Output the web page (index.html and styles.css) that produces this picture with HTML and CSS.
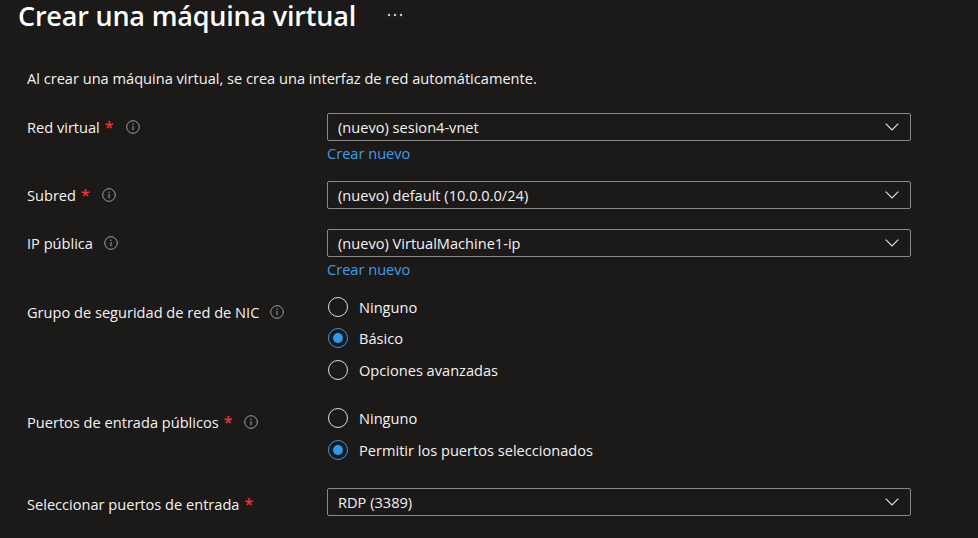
FILE: index.html
```html
<!DOCTYPE html>
<html lang="es">
<head>
<meta charset="utf-8">
<title>Crear una máquina virtual</title>
<link rel="stylesheet" href="styles.css">
</head>
<body>
<div class="page">
  <header class="header">
    <h1 class="title">Crear una máquina virtual</h1>
    <span class="more" aria-label="Más">
      <svg width="16" height="4" viewBox="0 0 16 4"><circle cx="2" cy="2" r="1.2" fill="#d2d0ce"/><circle cx="8" cy="2" r="1.2" fill="#d2d0ce"/><circle cx="14" cy="2" r="1.2" fill="#d2d0ce"/></svg>
    </span>
  </header>

  <p class="intro">Al crear una máquina virtual, se crea una interfaz de red automáticamente.</p>

  <div class="form">
    <div class="row r1">
      <div class="label"><span>Red virtual</span><span class="req">*</span><span class="info"><svg width="14" height="14" viewBox="0 0 14 14"><circle cx="7" cy="7" r="6.3" fill="none" stroke="#a19f9d" stroke-width="1"/><rect x="6.5" y="6" width="1" height="4.2" fill="#a19f9d"/><circle cx="7" cy="4.2" r="0.7" fill="#a19f9d"/></svg></span></div>
      <div class="control">
        <div class="select"><span>(nuevo) sesion4-vnet</span><svg class="chev" width="14" height="8" viewBox="0 0 14 8"><path d="M0.7 0.7 L7 7 L13.3 0.7" fill="none" stroke="#e1dfdd" stroke-width="1.2"/></svg></div>
        <a class="link">Crear nuevo</a>
      </div>
    </div>

    <div class="row r2">
      <div class="label"><span>Subred</span><span class="req">*</span><span class="info"><svg width="14" height="14" viewBox="0 0 14 14"><circle cx="7" cy="7" r="6.3" fill="none" stroke="#a19f9d" stroke-width="1"/><rect x="6.5" y="6" width="1" height="4.2" fill="#a19f9d"/><circle cx="7" cy="4.2" r="0.7" fill="#a19f9d"/></svg></span></div>
      <div class="control">
        <div class="select"><span>(nuevo) default (10.0.0.0/24)</span><svg class="chev" width="14" height="8" viewBox="0 0 14 8"><path d="M0.7 0.7 L7 7 L13.3 0.7" fill="none" stroke="#e1dfdd" stroke-width="1.2"/></svg></div>
      </div>
    </div>

    <div class="row r3">
      <div class="label"><span>IP pública</span><span class="info nreq"><svg width="14" height="14" viewBox="0 0 14 14"><circle cx="7" cy="7" r="6.3" fill="none" stroke="#a19f9d" stroke-width="1"/><rect x="6.5" y="6" width="1" height="4.2" fill="#a19f9d"/><circle cx="7" cy="4.2" r="0.7" fill="#a19f9d"/></svg></span></div>
      <div class="control">
        <div class="select"><span>(nuevo) VirtualMachine1-ip</span><svg class="chev" width="14" height="8" viewBox="0 0 14 8"><path d="M0.7 0.7 L7 7 L13.3 0.7" fill="none" stroke="#e1dfdd" stroke-width="1.2"/></svg></div>
        <a class="link">Crear nuevo</a>
      </div>
    </div>

    <div class="row r4">
      <div class="label lab-radio"><span>Grupo de seguridad de red de NIC</span><span class="info nreq"><svg width="14" height="14" viewBox="0 0 14 14"><circle cx="7" cy="7" r="6.3" fill="none" stroke="#a19f9d" stroke-width="1"/><rect x="6.5" y="6" width="1" height="4.2" fill="#a19f9d"/><circle cx="7" cy="4.2" r="0.7" fill="#a19f9d"/></svg></span></div>
      <div class="control radios">
        <div class="radio"><span class="dot"></span><span>Ninguno</span></div>
        <div class="radio on"><span class="dot"></span><span>Básico</span></div>
        <div class="radio"><span class="dot"></span><span>Opciones avanzadas</span></div>
      </div>
    </div>

    <div class="row r5">
      <div class="label lab-radio2"><span>Puertos de entrada públicos</span><span class="req">*</span><span class="info"><svg width="14" height="14" viewBox="0 0 14 14"><circle cx="7" cy="7" r="6.3" fill="none" stroke="#a19f9d" stroke-width="1"/><rect x="6.5" y="6" width="1" height="4.2" fill="#a19f9d"/><circle cx="7" cy="4.2" r="0.7" fill="#a19f9d"/></svg></span></div>
      <div class="control radios">
        <div class="radio"><span class="dot"></span><span>Ninguno</span></div>
        <div class="radio on"><span class="dot"></span><span>Permitir los puertos seleccionados</span></div>
      </div>
    </div>

    <div class="row r6">
      <div class="label"><span>Seleccionar puertos de entrada</span><span class="req">*</span></div>
      <div class="control">
        <div class="select"><span>RDP (3389)</span><svg class="chev" width="14" height="8" viewBox="0 0 14 8"><path d="M0.7 0.7 L7 7 L13.3 0.7" fill="none" stroke="#e1dfdd" stroke-width="1.2"/></svg></div>
      </div>
    </div>
  </div>
</div>
</body>
</html>
```

FILE: styles.css
```css
html, body {
  margin: 0;
  padding: 0;
  background: #1b1a19;
  height: 100%;
  overflow: hidden;
}
body {
  font-family: "Open Sans", "Noto Sans", sans-serif;
  font-size: 14.6px;
  color: #f3f2f1;
}
.page {
  padding-left: 27px;
}
.header {
  display: flex;
  align-items: center;
  margin-left: -9px;
  height: 32px;
}
.title {
  margin: 0;
  font-size: 27px;
  font-weight: 600;
  line-height: 32px;
  color: #ffffff;
  letter-spacing: -0.2px;
}
.more {
  display: flex;
  margin-left: 31px;
  margin-top: -2px;
}
.intro {
  margin: 36px 0 0 0;
  line-height: 20px;
  height: 20px;
}
.form {
  display: flex;
  flex-direction: column;
  margin-top: 25px;
}
.row {
  display: grid;
  grid-template-columns: 300px 584px;
}
.r2 { margin-top: 16px; }
.r3 { margin-top: 20px; }
.r4 { margin-top: 10px; }
.r5 { margin-top: 17px; }
.r6 { margin-top: 22px; }
.label {
  display: flex;
  align-items: center;
  height: 28px;
  line-height: 20px;
}
.lab-radio { height: 32px; padding-top: 5px; }
.lab-radio2 { height: 32px; padding-top: 3px; }
.r6 .label { padding-top: 2px; }
.req {
  color: #f1313f;
  margin-left: 5px;
  font-size: 16px;
  font-weight: 600;
}
.info {
  display: flex;
  margin-left: 12px;
}
.info.nreq { margin-left: 11px; }
.control {
  display: flex;
  flex-direction: column;
}
.select {
  box-sizing: border-box;
  height: 28px;
  border: 1px solid #8a8886;
  border-radius: 2px;
  display: flex;
  align-items: center;
  justify-content: space-between;
  padding: 0 11px 0 10px;
  line-height: 20px;
}
.chev { display: block; }
.link {
  color: #3b9ee8;
  line-height: 24px;
  height: 24px;
}
.radio {
  display: flex;
  align-items: center;
  height: 31.5px;
  gap: 11px;
}
.dot {
  box-sizing: border-box;
  width: 20px;
  height: 20px;
  border-radius: 50%;
  border: 1px solid #e1dfdd;
  margin-left: 1px;
  display: flex;
  align-items: center;
  justify-content: center;
}
.radio.on .dot {
  border-color: #2899f5;
}
.radio.on .dot::after {
  content: "";
  width: 10px;
  height: 10px;
  border-radius: 50%;
  background: #2899f5;
}
```
